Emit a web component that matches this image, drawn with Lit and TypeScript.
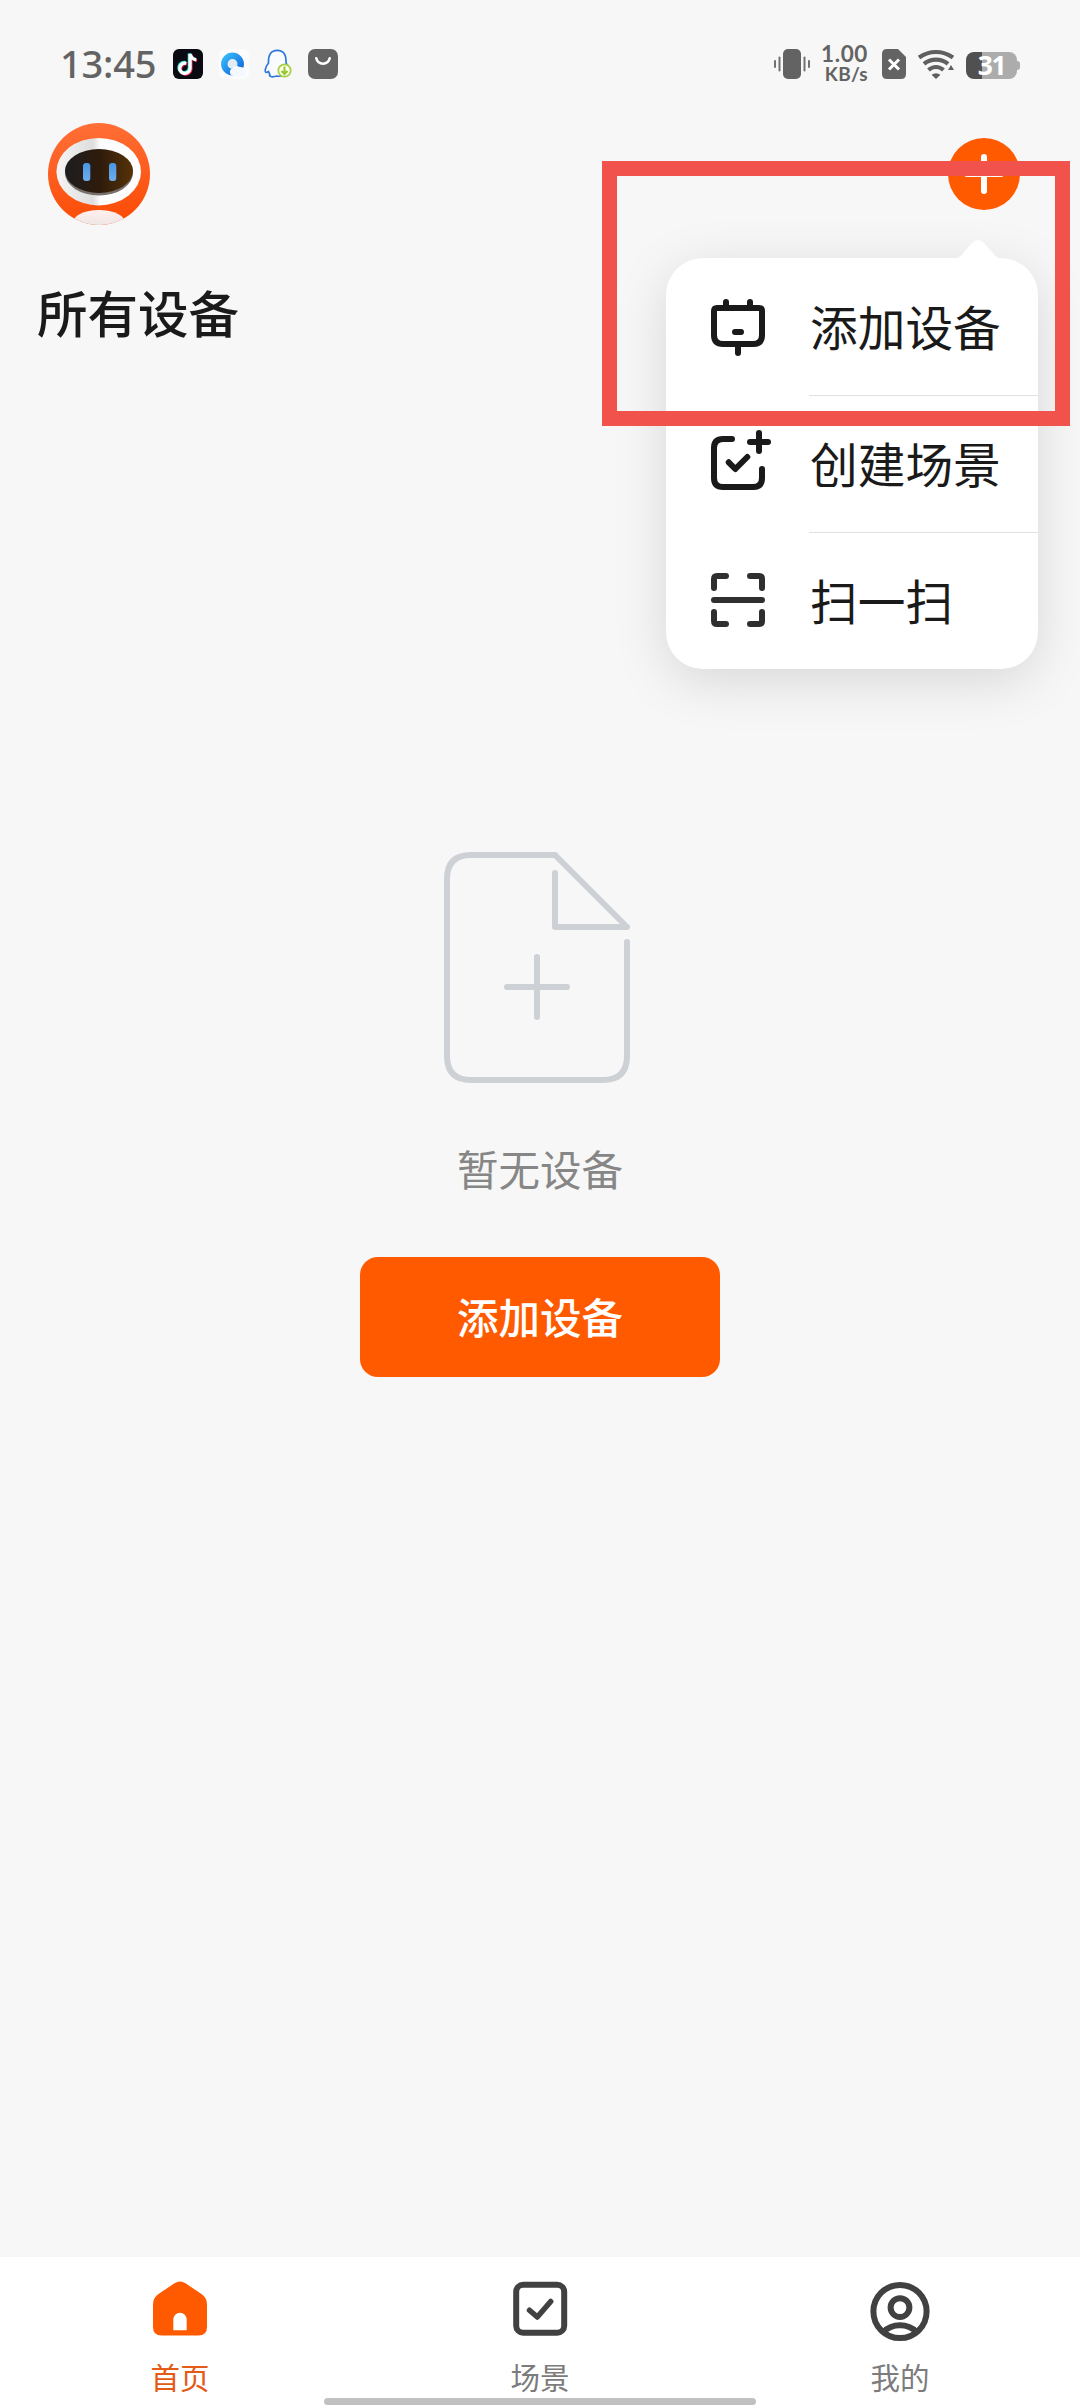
import { LitElement, html, css, svg } from "lit";
import { customElement, property } from "lit/decorators.js";
import { classMap } from "lit/directives/class-map.js";

const cjk = css`"Noto Sans CJK SC", "Noto Sans", sans-serif`;

/* All line icons are drawn on a 72 unit grid. */
const glyphs: Record<string, unknown> = {
  device: svg`
    <path d="M15 18H57Q60 18 60 21V45Q60 54 51 54H21Q12 54 12 45V21Q12 18 15 18ZM24 12V18M48 12V18M36 54V63M33 42H39"/>`,
  sceneAdd: svg`
    <path d="M30 12H21Q12 12 12 21V51Q12 60 21 60H51Q60 60 60 51V42M57 6V24M48 15H66M26.7 35.3L33.3 42L45.3 30"/>`,
  scan: svg`
    <path d="M12 24V15Q12 12 15 12H24M48 12H57Q60 12 60 15V24M12 36H60M12 48V57Q12 60 15 60H24M48 60H57Q60 60 60 57V48"/>`,
  home: svg`
    <path fill="currentColor" stroke="none" fill-rule="evenodd"
      d="M30.500 8.300Q36 4.800 41.500 8.300L57.500 19Q63 22.800 63 29.500V52Q63 60.500 54.500 60.500H17.500Q9 60.500 9 52V29.500Q9 22.800 14.500 19ZM29.300 55.300H42.700V44.500A6.700 6.700 0 0 0 29.300 44.500Z"/>`,
  scene: svg`
    <rect x="12.200" y="9.800" width="48" height="48" rx="7"/>
    <path stroke-width="5.500" d="M25.500 35.200L33.300 42L46.700 26.500"/>`,
  user: svg`
    <circle cx="36" cy="36.500" r="26.600"/><circle cx="36" cy="32.600" r="9.400"/>
    <path d="M19.500 57Q26 50.300 36 50.300T52.500 57"/>`,
};

@customElement("line-icon")
export class LineIcon extends LitElement {
  @property() name = "";

  static styles = css`
    :host { display: block; width: 72px; height: 72px; flex: none; }
    .art {
      display: block; width: 100%; height: 100%; overflow: visible; fill: none;
      stroke: currentColor; stroke-width: 6; stroke-linecap: round; stroke-linejoin: round;
    }
  `;

  render() {
    return html`<svg class="art" viewBox="0 0 72 72">${glyphs[this.name]}</svg>`;
  }
}

@customElement("status-bar")
export class StatusBar extends LitElement {
  static styles = css`
    :host {
      display: flex; justify-content: space-between; height: 108px; box-sizing: border-box;
      padding: 49px 60px 0 60px; color: #636363; font-family: "Noto Sans", sans-serif;
    }
    .side { display: flex; align-items: center; height: 30px; }
    .side svg { display: block; overflow: visible; flex: none; }
    .time { width: 113px; padding-bottom: 2px; font: 500 38px/30px "Noto Sans", sans-serif; letter-spacing: -0.2px; white-space: nowrap; }
    .apps { gap: 15.700px; }
    .rate { width: 50px; margin: 0 14px 0 8px; text-align: right; font: 700 19px/20px Lato, sans-serif; letter-spacing: 0.300px; white-space: nowrap; }
    .rate::first-line { font-size: 22.500px; letter-spacing: 0.600px; }
    .wifi { margin: 0 12px; }
    .battery {
      position: relative; width: 51px; height: 27px; margin-top: 3px; margin-right: 3px; border-radius: 8px;
      background: linear-gradient(90deg, #505050 16px, #acacac 16px);
      color: #fff; font: 700 26.500px/27px "Noto Sans", sans-serif; letter-spacing: -1.500px; text-align: center;
    }
    .battery::after {
      content: ""; position: absolute; left: 51px; top: 9px; width: 3px; height: 9px;
      border-radius: 0 3px 3px 0; background: #acacac;
    }
  `;

  render() {
    return html`
      <div class="side">
        <span class="time">13:45</span>
        <div class="side apps">
          <svg width="30" height="30" viewBox="0 0 30 30">
            <rect width="30" height="30" rx="6" fill="#090a12" />
            <g fill="none" stroke-width="3.200">
              <path stroke="#28e5dc" d="M12.500 13.500A5.200 5.200 0 1 0 16.300 19V4.500Q17.500 9 22.500 10.200" />
              <path stroke="#f5305d" d="M14 14.900A5.200 5.200 0 1 0 17.900 20.500V5.500Q19 10.500 24 11.500" />
              <path stroke="#fff" d="M13.200 14.200A5.200 5.200 0 1 0 17.100 19.700V5Q18.300 10 23.200 10.900" />
            </g>
          </svg>
          <svg width="30" height="30" viewBox="0 0 30 30">
            <defs>
              <linearGradient id="ring" x1="0" y1="0" x2="1" y2="1">
                <stop offset="0" stop-color="#35b8f8" /><stop offset="1" stop-color="#1269dc" />
              </linearGradient>
            </defs>
            <rect width="30" height="30" rx="6" fill="#fcfcfd" />
            <circle cx="13.500" cy="15" r="8.200" fill="#e3ebf5" stroke="url(#ring)" stroke-width="6.500" />
            <path fill="#f4f8ff" d="M14.500 27a4 4 0 0 1 -1-7.700a4.500 4.500 0 0 1 7-1.200a3.800 3.800 0 0 1 5 3.500a3 3 0 0 1-.5 5.400Z" />
          </svg>
          <svg width="28" height="30" viewBox="0 0 28 30">
            <path fill="#f9fbff" stroke="#2d77df" stroke-width="1.700" stroke-linejoin="round"
              d="M4.500 14Q4 1.300 13.300 1.300T22 14Q26 19 23.500 22Q21 23 20 25Q18 28 13 27Q6 29 5.500 26Q6 25 4.500 22.500Q1 25 1.200 21Q2 17 4.500 14Z" />
            <circle cx="20.500" cy="21.500" r="6.200" fill="#fbfff2" stroke="#a7cf43" stroke-width="1.800" />
            <path fill="none" stroke="#99c72b" stroke-width="2" d="M20.500 17.500V25M17.500 22L20.500 25L23.500 22" />
          </svg>
          <svg width="30" height="30" viewBox="0 0 30 30">
            <rect width="30" height="30" rx="7" fill="#646464" />
            <path fill="none" stroke="#fff" stroke-width="2.600" stroke-linecap="round" d="M8.300 9.300C10 16.500 20 16.500 21.700 9.300" />
          </svg>
        </div>
      </div>
      <div class="side">
        <svg width="36" height="30" viewBox="0 0 36 30">
          <rect x="9" width="18" height="30" rx="5" fill="#636363" />
          <path fill="none" stroke="#707070" stroke-width="2" stroke-linecap="round" d="M1 12V18M5.500 8.500V21.500M30.500 8.500V21.500M35 12V18" />
        </svg>
        <div class="rate">1.00<br />KB/s</div>
        <svg width="24" height="30" viewBox="0 0 24 30">
          <path fill="#636363" d="M5 0H16L24 8V25Q24 30 19 30H5Q0 30 0 25V5Q0 0 5 0Z" />
          <path stroke="#fff" stroke-width="3" d="M7 10.500L17 20.500M17 10.500L7 20.500" />
        </svg>
        <svg class="wifi" width="36" height="30" viewBox="0 0 36 30">
          <g fill="none" stroke="#606060" stroke-width="4.200">
            <path d="M1 8.500Q9 3 18 3T35 8.500" />
            <path d="M6 14.800Q11 10.600 18 10.600T30 14.800" />
            <path d="M10.500 21Q14 18 18 18T25.500 21" />
          </g>
          <path fill="#606060" d="M13.500 25.800Q18 22.500 22.500 25.800L18 30ZM30 21L33 16L36 21Z" />
        </svg>
        <div class="battery">31</div>
      </div>
    `;
  }
}

@customElement("robot-avatar")
export class RobotAvatar extends LitElement {
  static styles = css`
    :host { display: block; width: 102px; height: 102px; flex: none; }
    .art { display: block; }
  `;

  render() {
    return html`
      <svg class="art" width="102" height="102" viewBox="0 0 102 102">
        <defs>
          <linearGradient id="shell" x1="0.300" y1="0" x2="0.400" y2="1">
            <stop offset="0" stop-color="#ff6f37" /><stop offset="1" stop-color="#fb4b05" />
          </linearGradient>
          <linearGradient id="visor" x1="0" y1="0" x2="1" y2="0">
            <stop offset="0" stop-color="#1d1d20" /><stop offset="0.500" stop-color="#2e1b0c" /><stop offset="1" stop-color="#563208" />
          </linearGradient>
          <linearGradient id="eye" x1="0" y1="0" x2="0" y2="1">
            <stop offset="0" stop-color="#4896e4" /><stop offset="1" stop-color="#70adea" />
          </linearGradient>
          <linearGradient id="face" x1="0" y1="0" x2="1" y2="0">
            <stop offset="0" stop-color="#f6f4f4" /><stop offset="0.430" stop-color="#dededf" /><stop offset="0.520" stop-color="#fdfdfd" />
          </linearGradient>
          <linearGradient id="body" x1="0" y1="0" x2="0" y2="1">
            <stop offset="0" stop-color="#fff0ed" /><stop offset="1" stop-color="#dfdddf" />
          </linearGradient>
          <clipPath id="disc"><circle cx="51" cy="51" r="51" /></clipPath>
        </defs>
        <g clip-path="url(#disc)">
          <rect width="102" height="102" fill="url(#shell)" />
          <ellipse cx="51" cy="101" rx="27" ry="14" fill="url(#body)" />
          <ellipse cx="50.700" cy="48.700" rx="42.300" ry="33.700" fill="url(#face)" />
          <ellipse cx="51" cy="50" rx="34" ry="22.500" fill="#77706c" />
          <ellipse cx="51" cy="48" rx="34" ry="22" fill="url(#visor)" />
          <rect x="35" y="40" width="7.300" height="18" rx="3" fill="url(#eye)" />
          <rect x="61" y="40" width="7.300" height="18" rx="3" fill="url(#eye)" />
        </g>
      </svg>
    `;
  }
}

@customElement("action-menu")
export class ActionMenu extends LitElement {
  private items = [
    { icon: "device", label: "添加设备" },
    { icon: "sceneAdd", label: "创建场景" },
    { icon: "scan", label: "扫一扫", soft: true },
  ];

  static styles = css`
    :host {
      display: block; width: 372px; border-radius: 37px; background: #fff; color: #1a1a1a;
      box-shadow: 0 12px 54px rgba(0, 0, 0, 0.13);
    }
    .tip { position: absolute; right: 36px; top: -18px; display: block; fill: #fff; }
    .row { display: flex; align-items: stretch; height: 137px; padding-left: 36px; }
    .icon { align-self: center; margin-bottom: 1px; }
    .soft { color: #2f2f2f; }
    .label {
      flex: 1; margin: 0 0 -1px 35px; padding: 0 0 2px 1px; display: flex; align-items: center; box-sizing: border-box;
      font: 400 47.700px/70px ${cjk}; white-space: nowrap; border-bottom: 1px solid #e1e1e1;
    }
    .row:last-child .label { border-bottom-color: transparent; }
  `;

  render() {
    return html`
      <svg class="tip" width="48" height="19" viewBox="0 0 48 19">
        <path d="M0 19Q6 18 10 12L18 3Q24 -3 30 3L38 12Q42 18 48 19Z" />
      </svg>
      ${this.items.map(
        (item) => html`
          <div class="row">
            <line-icon class=${classMap({ icon: true, soft: !!item.soft })} name=${item.icon}></line-icon>
            <span class="label">${item.label}</span>
          </div>
        `,
      )}
    `;
  }
}

@customElement("tab-bar")
export class TabBar extends LitElement {
  private tabs = [
    { icon: "home", label: "首页", active: true },
    { icon: "scene", label: "场景", active: false },
    { icon: "user", label: "我的", active: false },
  ];

  static styles = css`
    :host { display: flex; flex-direction: column; height: 151px; background: #fff; }
    .tabs { display: grid; grid-template-columns: repeat(3, 1fr); height: 141px; }
    .tab { display: flex; flex-direction: column; align-items: center; padding-top: 18px; color: #414141; }
    .label { margin-top: 8px; font: 400 29.500px/42px ${cjk}; color: #7c7c7c; }
    .active { color: #ff5a00; }
    .active .label { color: #e55a17; }
    .handle { align-self: center; width: 432px; height: 7px; border-radius: 4px; background: #c1c1c1; z-index: 1; }
  `;

  render() {
    return html`
      <div class="tabs">
        ${this.tabs.map(
          (t) => html`
            <div class=${classMap({ tab: true, active: t.active })}>
              <line-icon name=${t.icon}></line-icon>
              <span class="label">${t.label}</span>
            </div>
          `,
        )}
      </div>
      <div class="handle"></div>
    `;
  }
}

@customElement("app-root")
export class AppRoot extends LitElement {
  static styles = css`
    :host {
      display: flex; flex-direction: column; position: relative; width: 1080px; height: 2408px;
      overflow: hidden; background: #f7f7f7; color: #1a1a1a; font-family: ${cjk};
    }
    .header { display: flex; justify-content: space-between; align-items: flex-start; padding: 15px 60px 0 48px; }
    .add { width: 72px; height: 72px; margin-top: 15px; padding: 0; border: 0; border-radius: 50%; background: #ff5a00; }
    .add svg { display: block; fill: none; stroke: #fff; stroke-width: 6; stroke-linecap: round; }
    .title { margin: 48px 0 0 37px; font-size: 50.500px; line-height: 76px; font-weight: 500; }
    .empty { flex: 1; display: flex; flex-direction: column; align-items: center; padding-top: 503px; }
    .doc { display: block; margin-right: 6px; fill: none; stroke: #cdd0d4; stroke-width: 6; stroke-linecap: round; stroke-linejoin: round; }
    .hint { margin: 55px 0 0; font-size: 41.500px; line-height: 60px; color: #868686; }
    .primary {
      width: 360px; height: 120px; margin-top: 59px; padding: 0 0 2px; border: 0; border-radius: 18px;
      background: #ff5a00; color: #fff; font: 500 41.500px/118px ${cjk};
    }
    .menu { position: absolute; left: 666px; top: 258px; }
    .marker {
      position: absolute; left: 602px; top: 161px; width: 468px; height: 265px;
      box-sizing: border-box; border: 15px solid #f1524c;
    }
  `;

  render() {
    return html`
      <status-bar></status-bar>
      <header class="header">
        <robot-avatar></robot-avatar>
        <button class="add">
          <svg width="72" height="72" viewBox="0 0 72 72"><path d="M36 19V53M19 36H53" /></svg>
        </button>
      </header>
      <h1 class="title">所有设备</h1>
      <main class="empty">
        <svg class="doc" width="186" height="231" viewBox="0 0 186 231">
          <path d="M111 3H27Q3 3 3 27V204Q3 228 27 228H159Q183 228 183 204V90M111 3L183 75H111V21M93 105V165M63 135H123" />
        </svg>
        <p class="hint">暂无设备</p>
        <button class="primary">添加设备</button>
      </main>
      <tab-bar></tab-bar>
      <action-menu class="menu"></action-menu>
      <div class="marker"></div>
    `;
  }
}
